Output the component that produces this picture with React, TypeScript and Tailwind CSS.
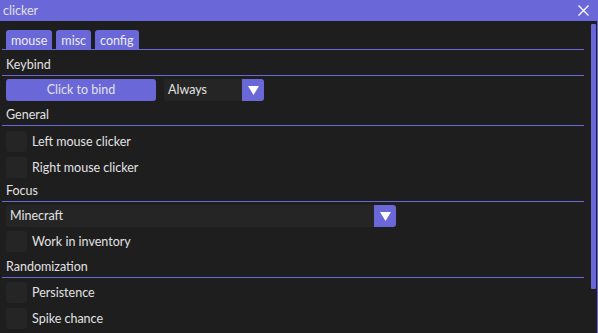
const PURPLE = 'bg-[#6a67d9]';

function Header({ label, top }: { label: string; top: string }) {
  return (
    <div className="flex flex-col">
      <div className={`${top} h-[16px] leading-[16px] pl-[4px]`}>{label}</div>
      <div className="mt-[2px] h-px w-[582px] bg-[#6a67d9]" />
    </div>
  );
}

function Arrow() {
  return (
    <div className={`w-[22px] h-[22px] ${PURPLE} rounded-r-[3px] flex items-center justify-center`}>
      <svg width="11" height="9" viewBox="0 0 11 9">
        <polygon points="0,0 11,0 5.5,9" fill="#ffffff" />
      </svg>
    </div>
  );
}

function Combo({ value, width }: { value: string; width: string }) {
  return (
    <div className={`flex h-[22px] ${width}`}>
      <div className="flex-1 bg-[#252525] rounded-l-[3px] pl-[4px] pt-[1px] flex items-center">{value}</div>
      <Arrow />
    </div>
  );
}

function Check({ label }: { label: string }) {
  return (
    <div className="flex items-center gap-[5px] h-[21px]">
      <div className="w-[21px] h-[21px] bg-[#252525] rounded-[3px]" />
      <span className="pt-[2px]">{label}</span>
    </div>
  );
}

export default function App() {
  const tabs = ['mouse', 'misc', 'config'];

  return (
    <div
      className="w-[598px] h-[333px] bg-[#1e1e1e] text-[#e2e2e2] text-[12.5px] overflow-hidden flex flex-col border-r border-[#6a67d9]"
      style={{ fontFamily: 'Lato, sans-serif' }}
    >
      {/* title bar */}
      <div className={`h-[21px] shrink-0 ${PURPLE} flex items-center justify-between pl-[3px] pr-[8px]`}>
        <span className="leading-[21px]">clicker</span>
        <svg width="11" height="11" viewBox="0 0 11 11">
          <path d="M0.5 0.5 L10.5 10.5 M10.5 0.5 L0.5 10.5" stroke="#ffffff" strokeWidth="1.3" />
        </svg>
      </div>

      <div className="flex flex-1 min-h-0">
        {/* content */}
        <div className="w-[588px] shrink-0 pl-[2px] flex flex-col">
          <div className="mt-[9px] flex gap-[4px] pl-[4px]">
            {tabs.map(t => (
              <div key={t} className={`${PURPLE} h-[19px] px-[5px] pt-[1px] rounded-t-[3px] leading-[19px] text-[#ececec]`}>
                {t}
              </div>
            ))}
          </div>
          <div className="h-px w-[582px] bg-[#6a67d9]" />

          <Header label="Keybind" top="mt-[7px]" />
          <div className="mt-[3px] pl-[4px] flex gap-[8px]">
            <div className={`w-[150px] h-[22px] ${PURPLE} rounded-[3px] pt-[1px] flex items-center justify-center`}>
              Click to bind
            </div>
            <Combo value="Always" width="w-[100px]" />
          </div>

          <Header label="General" top="mt-[6px]" />
          <div className="mt-[5px] pl-[4px] flex flex-col gap-[5px]">
            <Check label="Left mouse clicker" />
            <Check label="Right mouse clicker" />
          </div>

          <Header label="Focus" top="mt-[5px]" />
          <div className="mt-[3px] pl-[4px] flex flex-col gap-[4px]">
            <Combo value="Minecraft" width="w-[390px]" />
            <Check label="Work in inventory" />
          </div>

          <Header label="Randomization" top="mt-[7px]" />
          <div className="mt-[4px] pl-[4px] flex flex-col gap-[5px]">
            <Check label="Persistence" />
            <Check label="Spike chance" />
          </div>
        </div>

        {/* scrollbar */}
        <div className="flex-1 flex justify-end pt-[3px] pr-[1px]">
          <div className="w-[5px] h-[265px] bg-[#6a67d9] rounded-[1px]" />
        </div>
      </div>
    </div>
  );
}
